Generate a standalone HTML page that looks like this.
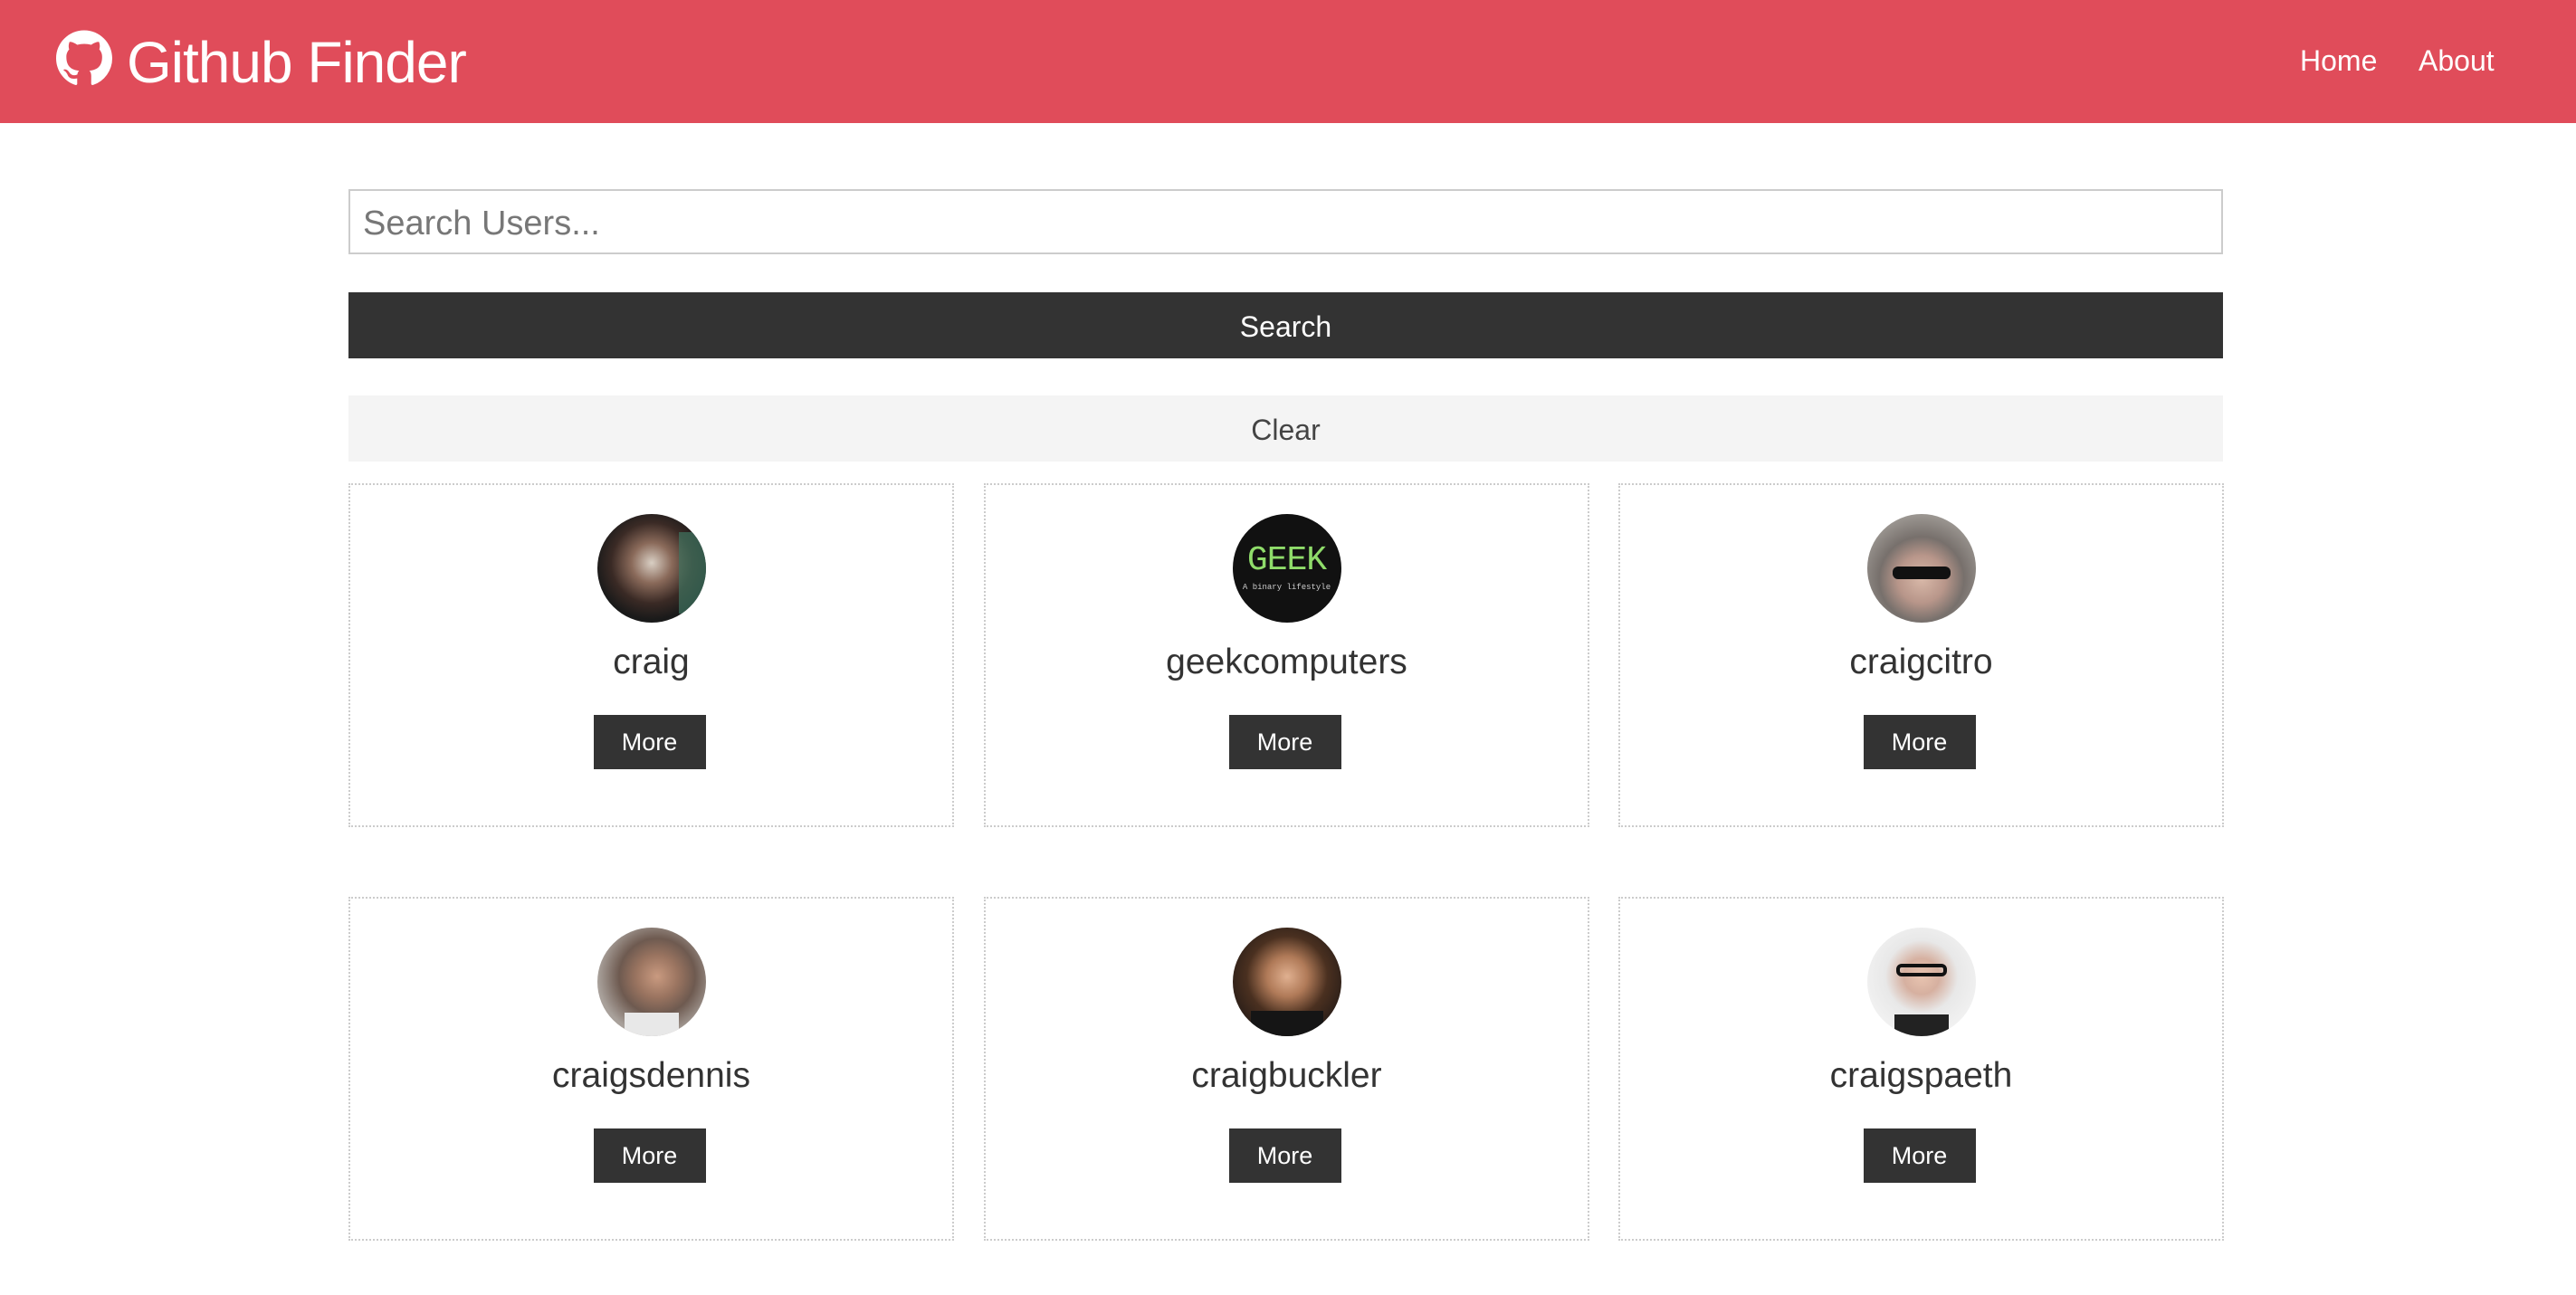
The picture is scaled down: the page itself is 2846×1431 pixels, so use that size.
<!DOCTYPE html>
<html><head><meta charset="utf-8"><style>
*{box-sizing:border-box;margin:0;padding:0}
body{width:2846px;height:1431px;background:#fff;font-family:"Liberation Sans",Arial,sans-serif;position:relative;overflow:hidden;color:#333}
.nav{position:absolute;left:0;top:0;width:2846px;height:136px;background:#e04c5a;color:#fff}
.logo{position:absolute;left:140px;top:24px;font-size:64px;line-height:90px;letter-spacing:-1px}
.links{position:absolute;top:45px;font-size:32px;line-height:44px}
.abs{position:absolute}
.input{left:385px;top:209px;width:2071px;height:72px;border:2px solid #ccc;font-size:38px;color:#777;padding-left:14px;line-height:72px}
.btn{left:385px;top:323px;width:2071px;height:73px;background:#333;color:#fff;font-size:32px;text-align:center;line-height:77px}
.clear{left:385px;top:437px;width:2071px;height:73px;background:#f4f4f4;color:#444;font-size:32px;text-align:center;line-height:77px}
.card{position:absolute;width:669px;height:380px;border:2px dotted #ccc;text-align:center}
.av{position:absolute;left:50%;top:32px;margin-left:-60px;width:120px;height:120px;border-radius:50%;overflow:hidden}
.name{position:absolute;left:0;right:0;top:172px;font-size:39px;line-height:48px;color:#333}
.more{position:absolute;left:50%;margin-left:-64px;top:254px;width:124px;height:60px;background:#333;color:#fff;font-size:27px;line-height:60px}
</style></head><body>
<div class="nav">
<svg class="abs" style="left:62px;top:33px" width="62" height="63" viewBox="0 0 16 16"><path fill="#fff" d="M8 0C3.58 0 0 3.58 0 8c0 3.54 2.29 6.530 5.470 7.59.4.07.55-.17.55-.38 0-.19-.01-.82-.01-1.49-2.01.37-2.530-.49-2.690-.94-.09-.23-.48-.94-.82-1.13-.28-.15-.68-.52-.01-.53.63-.01 1.08.58 1.23.82.72 1.21 1.87.87 2.33.66.07-.52.28-.87.51-1.07-1.78-.2-3.64-.89-3.64-3.95 0-.87.31-1.59.82-2.15-.08-.2-.36-1.02.08-2.12 0 0 .67-.21 2.2.82.64-.18 1.32-.27 2-.27.68 0 1.36.09 2 .27 1.53-1.04 2.2-.82 2.2-.82.44 1.1.16 1.92.08 2.12.51.56.82 1.27.82 2.15 0 3.07-1.87 3.75-3.65 3.95.29.25.54.73.54 1.48 0 1.07-.01 1.93-.01 2.2 0 .21.15.46.55.38A8.013 8.013 0 0 0 16 8c0-4.42-3.58-8-8-8z"/></svg>
<div class="logo">Github Finder</div>
<div class="links" style="left:2541px">Home</div>
<div class="links" style="left:2672px">About</div>
</div>
<div class="abs input">Search Users...</div>
<div class="abs btn">Search</div>
<div class="abs clear">Clear</div>

<div class="card" style="left:385px;top:534px"><div class="av" style="background:radial-gradient(circle at 50% 45%,#d9cfc4 0,#8a6a5a 25%,#3a2a25 50%,#1a1a1a 70%),#222"><div style="position:absolute;right:0;top:20px;width:30px;height:90px;background:#3f7460;opacity:.7"></div></div><div class="name">craig</div><div class="more">More</div></div>
<div class="card" style="left:1087px;top:534px"><div class="av" style="background:#111"><div style="position:absolute;left:0;right:0;top:30px;font-family:'Liberation Mono',monospace;font-size:38px;color:#8fdc6a;letter-spacing:-1px">GEEK</div><div style="position:absolute;left:0;right:0;top:76px;font-size:9px;color:#ccc;font-family:'Liberation Mono',monospace">A binary lifestyle</div></div><div class="name">geekcomputers</div><div class="more">More</div></div>
<div class="card" style="left:1788px;top:534px"><div class="av" style="background:radial-gradient(circle at 50% 60%,#d8b8a8 0,#b8968a 28%,#77706c 50%,#9a9590 75%)"><div style="position:absolute;left:28px;top:58px;width:64px;height:14px;background:#111;border-radius:6px"></div></div><div class="name">craigcitro</div><div class="more">More</div></div>

<div class="card" style="left:385px;top:991px"><div class="av" style="background:radial-gradient(circle at 55% 45%,#c99a80 0,#9a7460 25%,#6e5a50 45%,#a8a09a 70%)"><div style="position:absolute;left:30px;bottom:0;width:60px;height:26px;background:#e8e8e8"></div></div><div class="name">craigsdennis</div><div class="more">More</div></div>
<div class="card" style="left:1087px;top:991px"><div class="av" style="background:radial-gradient(circle at 50% 45%,#e0b090 0,#b07a58 25%,#4a3020 50%,#2a1e18 75%)"><div style="position:absolute;left:20px;bottom:0;width:80px;height:28px;background:#151515"></div></div><div class="name">craigbuckler</div><div class="more">More</div></div>
<div class="card" style="left:1788px;top:991px"><div class="av" style="background:radial-gradient(circle at 50% 45%,#e8c4b0 0,#d6b0a0 22%,#e8e8e8 45%,#f2f2f2 75%)"><div style="position:absolute;left:32px;top:40px;width:56px;height:14px;border:4px solid #111;border-radius:6px"></div><div style="position:absolute;left:30px;bottom:0;width:60px;height:24px;background:#222"></div></div><div class="name">craigspaeth</div><div class="more">More</div></div>
</body></html>
